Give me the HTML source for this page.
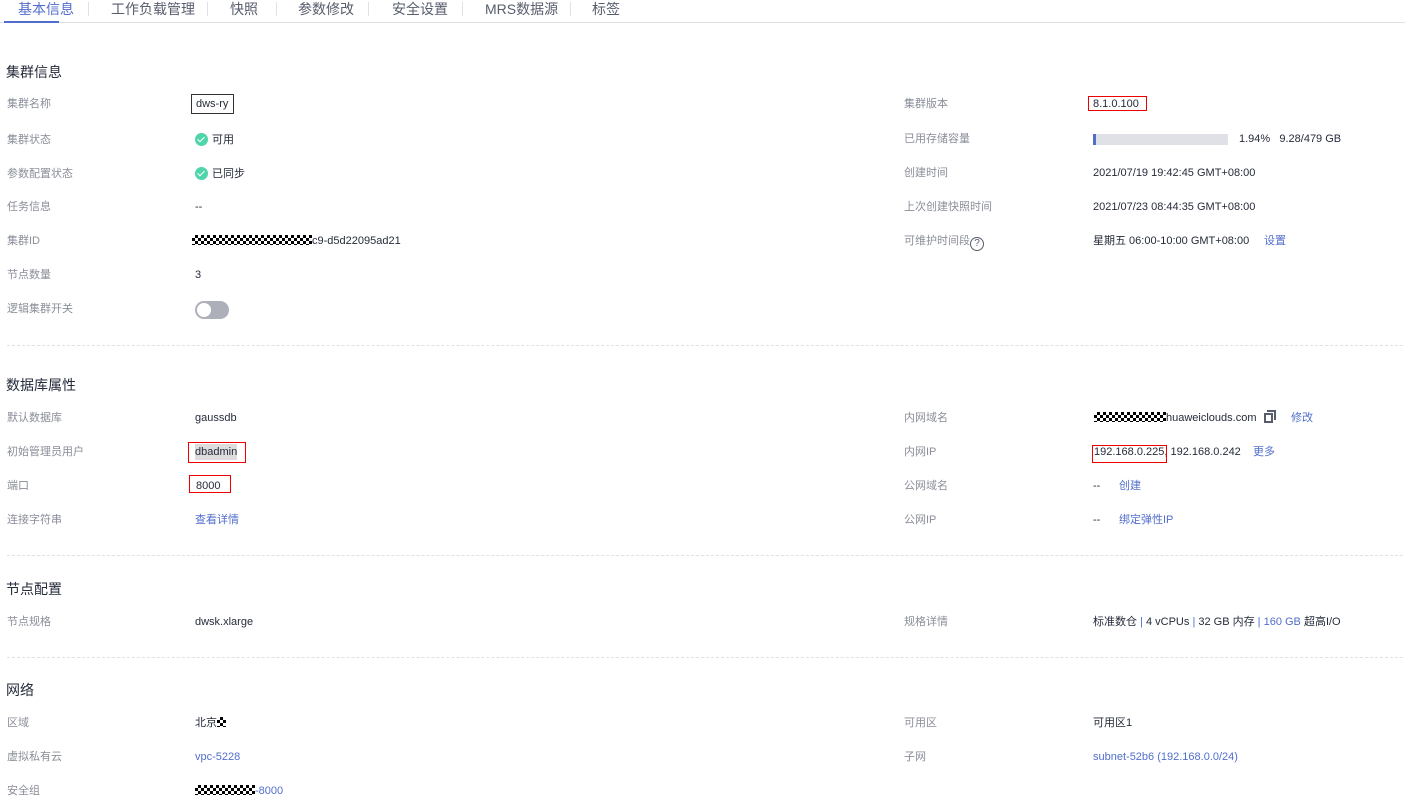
<!DOCTYPE html>
<html><head><meta charset="utf-8"><style>
*{margin:0;padding:0;box-sizing:border-box}
body{width:1405px;height:811px;background:#fff;font-family:"Liberation Sans","Noto Sans CJK SC",sans-serif;font-size:11px;color:#252b3a;position:relative;overflow:hidden}
.a{position:absolute;white-space:nowrap;line-height:16px}
.l{color:#8a8e99}
.h{font-size:14px;color:#252b3a;line-height:18px}
.k{color:#526ecc}
.tab{position:absolute;top:0;font-size:14px;color:#575d6c;line-height:18px}
.sep{position:absolute;top:2px;width:1px;height:14px;background:#dfe1e6}
.dash{position:absolute;left:7px;right:2px;height:0;border-top:1px dashed #dfe1e6}
.chk{display:inline-block;height:10px;vertical-align:-1px;background:repeating-conic-gradient(#000 0 25%,#fff 0 50%) 0 0/6px 6px}
.box{position:absolute;border:1px solid #e00}
.ok{display:inline-block;width:13px;height:13px;border-radius:50%;background:#50d4ab;vertical-align:-3px;margin-right:4px;position:relative}
.ok:after{content:"";position:absolute;left:4px;top:2px;width:3px;height:6px;border:solid #fff;border-width:0 1.5px 1.5px 0;transform:rotate(45deg)}
</style></head><body>
<div class="tab" style="left:18px;color:#526ecc">基本信息</div>
<div class="sep" style="left:88px"></div>
<div class="tab" style="left:111px">工作负载管理</div>
<div class="sep" style="left:207px"></div>
<div class="tab" style="left:230px">快照</div>
<div class="sep" style="left:276px"></div>
<div class="tab" style="left:298px">参数修改</div>
<div class="sep" style="left:368px"></div>
<div class="tab" style="left:392px">安全设置</div>
<div class="sep" style="left:462px"></div>
<div class="tab" style="left:485px">MRS数据源</div>
<div class="sep" style="left:570px"></div>
<div class="tab" style="left:592px">标签</div>
<div style="position:absolute;left:0;right:0;top:22px;border-top:1px solid #dfe1e6"></div>
<div style="position:absolute;left:4px;width:55px;top:21px;height:2px;background:#526ecc"></div>

<div class="a h" style="left:6px;top:63px">集群信息</div>
<div class="a l" style="left:7px;top:96px">集群名称</div><div class="a" style="left:196px;top:96px">dws-ry</div><div class="box" style="left:191px;top:94px;height:20px;border-color:#333;width:43px"></div>
<div class="a l" style="left:7px;top:132px">集群状态</div><div class="a" style="left:195px;top:132px"><span class="ok"></span>可用</div>
<div class="a l" style="left:7px;top:166px">参数配置状态</div><div class="a" style="left:195px;top:166px"><span class="ok"></span>已同步</div>
<div class="a l" style="left:7px;top:199px">任务信息</div><div class="a" style="left:195px;top:199px">--</div>
<div class="a l" style="left:7px;top:233px">集群ID</div><div class="a" style="left:192px;top:233px"><span class="chk" style="width:120px"></span>c9-d5d22095ad21</div>
<div class="a l" style="left:7px;top:267px">节点数量</div><div class="a" style="left:195px;top:267px">3</div>
<div class="a l" style="left:7px;top:301px">逻辑集群开关</div>
<div style="position:absolute;left:195px;top:301px;width:34px;height:18px;border-radius:9px;background:#adb0b8"><div style="position:absolute;left:2px;top:2px;width:14px;height:14px;border-radius:50%;background:#fff"></div></div>

<div class="a l" style="left:904px;top:96px">集群版本</div><div class="a" style="left:1093px;top:96px">8.1.0.100</div><div class="box" style="left:1088px;top:96px;width:59px;height:15px"></div>
<div class="a l" style="left:904px;top:131px">已用存储容量</div>
<div style="position:absolute;left:1093px;top:134px;width:135px;height:11px;background:#dfe1e6"><div style="width:3px;height:11px;background:#526ecc"></div></div>
<div class="a" style="left:1239px;top:131px">1.94%&nbsp;&nbsp;&nbsp;9.28/479 GB</div>
<div class="a l" style="left:904px;top:165px">创建时间</div><div class="a" style="left:1093px;top:165px">2021/07/19 19:42:45 GMT+08:00</div>
<div class="a l" style="left:904px;top:199px">上次创建快照时间</div><div class="a" style="left:1093px;top:199px">2021/07/23 08:44:35 GMT+08:00</div>
<div class="a l" style="left:904px;top:233px">可维护时间段<span style="display:inline-block;width:14px;height:14px;border:1.5px solid #575d6c;border-radius:50%;color:#575d6c;font-size:10px;line-height:11px;text-align:center;vertical-align:-2px">?</span></div>
<div class="a" style="left:1093px;top:233px">星期五 06:00-10:00 GMT+08:00</div><div class="a k" style="left:1264px;top:233px">设置</div>

<div class="dash" style="top:345px"></div>
<div class="a h" style="left:6px;top:376px">数据库属性</div>
<div class="a l" style="left:7px;top:410px">默认数据库</div><div class="a" style="left:195px;top:410px">gaussdb</div>
<div class="a l" style="left:7px;top:444px">初始管理员用户</div><div class="a" style="left:195px;top:444px;background:#ddd">dbadmin</div><div class="box" style="left:188px;top:442px;width:58px;height:21px"></div>
<div class="a l" style="left:7px;top:478px">端口</div><div class="a" style="left:196px;top:478px">8000</div><div class="box" style="left:189px;top:475px;width:42px;height:18px"></div>
<div class="a l" style="left:7px;top:512px">连接字符串</div><div class="a k" style="left:195px;top:512px">查看详情</div>

<div class="a l" style="left:904px;top:410px">内网域名</div><div class="a" style="left:1094px;top:410px"><span class="chk" style="width:72px"></span>huaweiclouds.com</div>
<div style="position:absolute;left:1264px;top:413px;width:9px;height:10px;border:2px solid #575d6c"></div><div style="position:absolute;left:1267px;top:410px;width:9px;height:10px;border-top:2px solid #575d6c;border-right:2px solid #575d6c"></div>
<div class="a k" style="left:1291px;top:410px">修改</div>
<div class="a l" style="left:904px;top:444px">内网IP</div><div class="a" style="left:1094px;top:444px">192.168.0.225, 192.168.0.242</div><div class="box" style="left:1092px;top:445px;width:75px;height:18px"></div><div class="a k" style="left:1253px;top:444px">更多</div>
<div class="a l" style="left:904px;top:478px">公网域名</div><div class="a" style="left:1093px;top:478px">--</div><div class="a k" style="left:1119px;top:478px">创建</div>
<div class="a l" style="left:904px;top:512px">公网IP</div><div class="a" style="left:1093px;top:512px">--</div><div class="a k" style="left:1119px;top:512px">绑定弹性IP</div>

<div class="dash" style="top:555px"></div>
<div class="a h" style="left:6px;top:580px">节点配置</div>
<div class="a l" style="left:7px;top:614px">节点规格</div><div class="a" style="left:195px;top:614px">dwsk.xlarge</div>
<div class="a l" style="left:904px;top:614px">规格详情</div><div class="a" style="left:1093px;top:614px">标准数仓 <span class="k">|</span> 4 vCPUs <span class="k">|</span> 32 GB 内存 <span class="k">|</span> <span class="k">160 GB</span> 超高I/O</div>

<div class="dash" style="top:657px"></div>
<div class="a h" style="left:6px;top:681px">网络</div>
<div class="a l" style="left:7px;top:715px">区域</div><div class="a" style="left:195px;top:715px">北京<span class="chk" style="width:9px"></span></div>
<div class="a l" style="left:7px;top:749px">虚拟私有云</div><div class="a k" style="left:195px;top:749px">vpc-5228</div>
<div class="a l" style="left:7px;top:783px">安全组</div><div class="a" style="left:195px;top:783px"><span class="chk" style="width:60px"></span><span class="k">-8000</span></div>
<div class="a l" style="left:904px;top:715px">可用区</div><div class="a" style="left:1093px;top:715px">可用区1</div>
<div class="a l" style="left:904px;top:749px">子网</div><div class="a k" style="left:1093px;top:749px">subnet-52b6 (192.168.0.0/24)</div>
</body></html>
